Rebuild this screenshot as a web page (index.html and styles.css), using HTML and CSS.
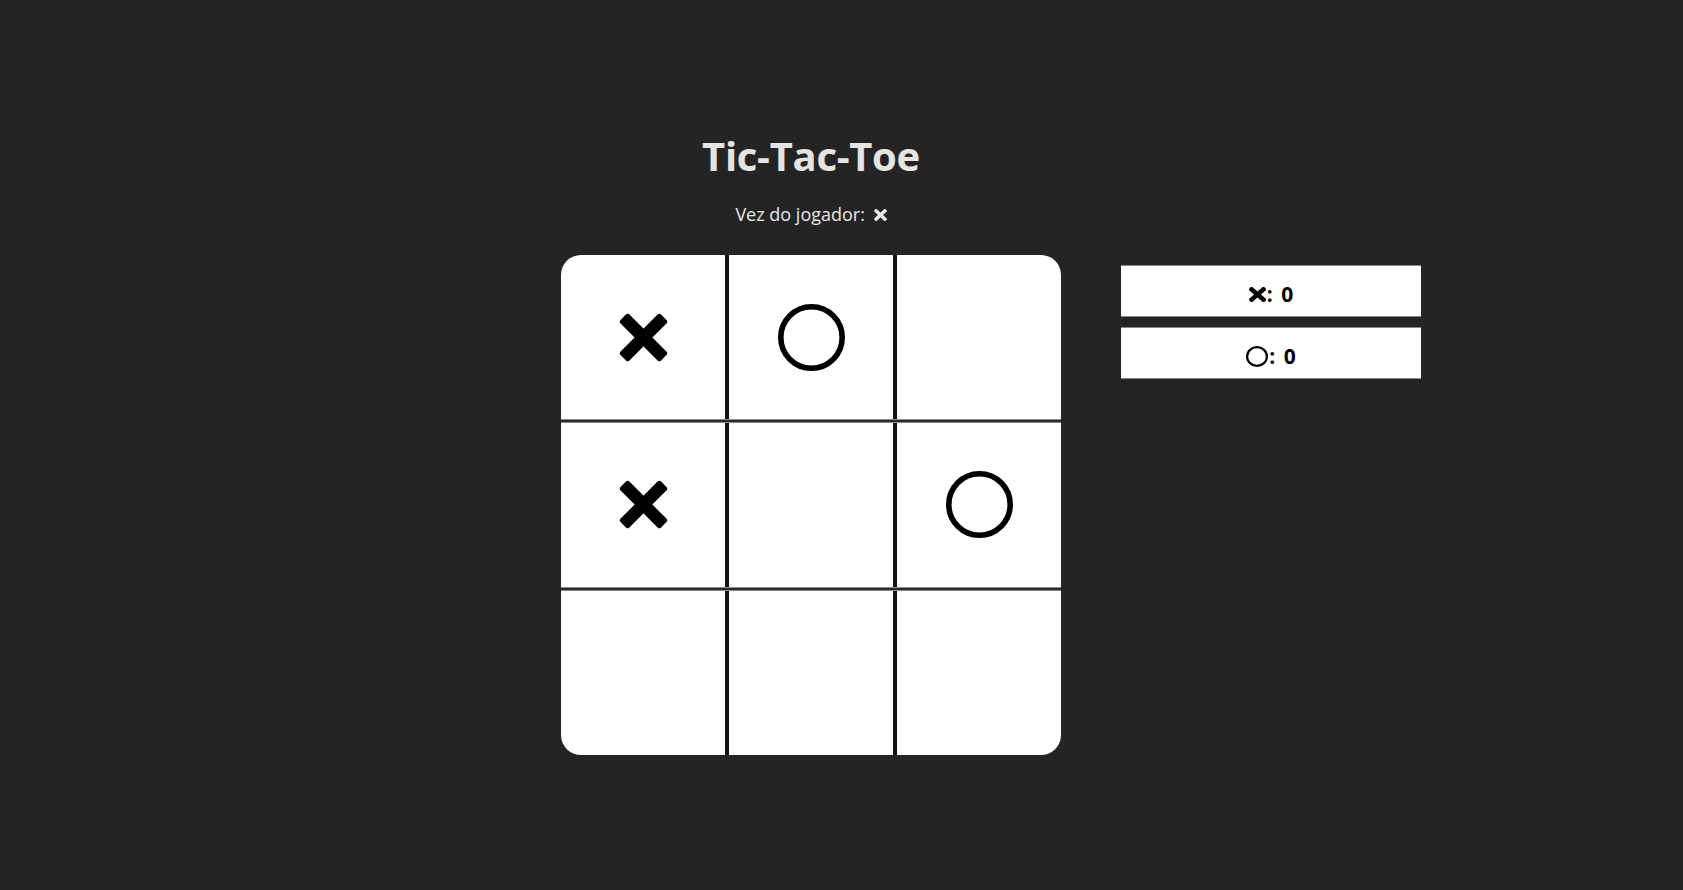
FILE: index.html
```html
<!DOCTYPE html>
<html lang="pt">
<head>
<meta charset="utf-8">
<title>Tic-Tac-Toe</title>
<link rel="stylesheet" href="styles.css">
</head>
<body>
<main class="app">
  <header class="header">
    <h1 class="title">Tic-Tac-Toe</h1>
    <p class="turn">Vez do jogador: <svg class="turn-x" viewBox="0 0 13 12" width="13" height="12"><rect x="-1.2" y="4.2" width="15.4" height="3.6" rx="0.8" transform="rotate(43 6.5 6)"/><rect x="-1.2" y="4.2" width="15.4" height="3.6" rx="0.8" transform="rotate(-43 6.5 6)"/></svg></p>
  </header>
  <section class="game">
    <div class="board">
      <div class="row">
        <div class="cell"><svg class="mark-x" viewBox="0 0 49 49" width="49" height="49"><rect x="-4.15" y="18.25" width="57.3" height="12.5" rx="2.5" transform="rotate(45 24.5 24.5)"/><rect x="-4.15" y="18.25" width="57.3" height="12.5" rx="2.5" transform="rotate(-45 24.5 24.5)"/></svg></div>
        <div class="cell"><svg class="mark-o" viewBox="0 0 67 67" width="67" height="67"><circle cx="33.5" cy="33.5" r="30.7" fill="none" stroke="#000" stroke-width="5.6"/></svg></div>
        <div class="cell"></div>
      </div>
      <div class="row">
        <div class="cell"><svg class="mark-x" viewBox="0 0 49 49" width="49" height="49"><rect x="-4.15" y="18.25" width="57.3" height="12.5" rx="2.5" transform="rotate(45 24.5 24.5)"/><rect x="-4.15" y="18.25" width="57.3" height="12.5" rx="2.5" transform="rotate(-45 24.5 24.5)"/></svg></div>
        <div class="cell"></div>
        <div class="cell"><svg class="mark-o" viewBox="0 0 67 67" width="67" height="67"><circle cx="33.5" cy="33.5" r="30.7" fill="none" stroke="#000" stroke-width="5.6"/></svg></div>
      </div>
      <div class="row">
        <div class="cell"></div>
        <div class="cell"></div>
        <div class="cell"></div>
      </div>
    </div>
    <div class="scores">
      <div class="score"><svg class="score-x" viewBox="0 0 17 15" width="17" height="15"><rect x="-1.6" y="5.25" width="20.2" height="4.5" rx="0.9" transform="rotate(41 8.5 7.5)"/><rect x="-1.6" y="5.25" width="20.2" height="4.5" rx="0.9" transform="rotate(-41 8.5 7.5)"/></svg><span>: 0</span></div>
      <div class="score"><svg class="score-o" viewBox="0 0 22 21" width="22" height="21"><ellipse cx="11" cy="10.5" rx="9.9" ry="9.4" fill="none" stroke="#000" stroke-width="2.2"/></svg><span>: 0</span></div>
    </div>
  </section>
</main>
</body>
</html>
```

FILE: styles.css
```css
html, body {
  margin: 0;
  padding: 0;
  background: #242424;
}

body {
  font-family: "Open Sans", "Noto Sans", "Liberation Sans", sans-serif;
  color: #e6e6e6;
}

.app {
  padding-top: 132px;
}

.header {
  width: 500px;
  margin-left: 561px;
  text-align: center;
}

.title {
  margin: 0;
  font-size: 40px;
  line-height: 48px;
  font-weight: 700;
  color: #e4e4e4;
  letter-spacing: -0.3px;
}

.turn {
  margin: 22px 0 0;
  font-size: 18px;
  line-height: 24px;
  color: #e8e8e8;
}

.turn-x {
  fill: #e8e8e8;
  margin-left: 4px;
  vertical-align: 0px;
}

.game {
  display: flex;
  align-items: flex-start;
  gap: 60px;
  margin-top: 29px;
  margin-left: 561px;
}

.board {
  width: 500px;
  height: 500px;
  border-radius: 20px;
  overflow: hidden;
  display: grid;
  grid-template-rows: repeat(3, 1fr);
  row-gap: 2px;
  background: #2a2a2a;
}

.row {
  display: grid;
  grid-template-columns: repeat(3, 1fr);
  column-gap: 4px;
  background: #111;
}

.row + .row {
  border-top: 1px solid #8a8a8a;
}

.row:not(:last-child) {
  border-bottom: 1px solid #8a8a8a;
}

.cell {
  background: #fff;
  display: flex;
  align-items: center;
  justify-content: center;
}

.mark-x {
  fill: #000;
}

.scores {
  width: 300px;
  margin-top: 10px;
  display: flex;
  flex-direction: column;
  gap: 10px;
}

.score {
  box-sizing: border-box;
  height: 52px;
  padding-top: 6px;
  background: #fff;
  border-top: 1px solid #888;
  border-bottom: 1px solid #888;
  display: flex;
  align-items: center;
  justify-content: center;
  font-size: 21px;
  font-weight: 700;
  color: #000;
}

.score-x {
  fill: #000;
}

.score svg {
  margin-right: 1px;
}

.score span {
  line-height: 24px;
  word-spacing: 3px;
}
```
